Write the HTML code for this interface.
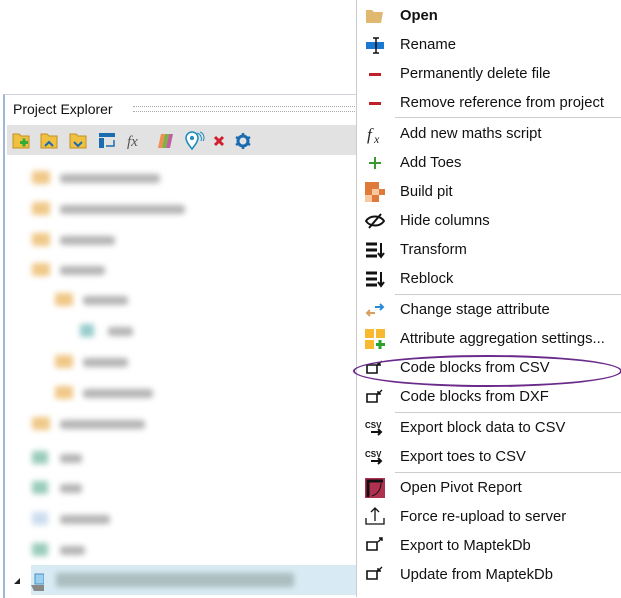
<!DOCTYPE html>
<html><head><style>
body{margin:0;width:621px;height:597px;background:#fff;position:relative;overflow:hidden;font-family:"Liberation Sans",sans-serif}
.panel{position:absolute;left:3px;top:94px;width:353px;height:503px;border-top:1px solid #d0d0d8;border-left:2px solid #9fb6d6;background:#fff}
.hdr{position:absolute;left:8px;top:6px;font-size:14px;color:#111}
.dots{position:absolute;left:128px;top:11px;width:230px;height:4px;border-top:1px dotted #aaa;border-bottom:1px dotted #aaa}
.tb{position:absolute;left:2px;top:30px;width:360px;height:30px;background:#e2e2e2}
.tree{position:absolute;left:0;top:0;filter:blur(3px)}
.fo{position:absolute;width:18px;height:13px;background:#f0c888;border-radius:2px}
.tx{position:absolute;height:9px;background:#b4b4b4;border-radius:3px}
.menu{position:absolute;left:356px;top:0;width:265px;height:597px;background:#fff;border-left:1px solid #ccc}
.it{position:absolute;left:43px;font-size:14.8px;color:#111;line-height:18px;white-space:nowrap}
.sep{position:absolute;left:14px;right:0;height:1px;background:#ccc}
.ic{position:absolute;left:8px;width:20px;height:20px}
</style></head><body>
<div class="panel">
 <div class="hdr">Project Explorer</div>
 <div class="dots"></div>
 <div class="tb">
  <svg width="260" height="30" viewBox="0 0 260 30">
   <g><path d="M6 9h6l2 2h8v12H6z" fill="#f0c040" stroke="#c09020"/><rect x="13" y="16" width="8" height="3" fill="#3a3"/><rect x="15.5" y="13.5" width="3" height="8" fill="#3a3"/></g>
   <g transform="translate(28,0)"><path d="M6 9h6l2 2h8v12H6z" fill="#f0c040" stroke="#c09020"/><path d="M10 21l4-4 4 4" fill="none" stroke="#1a6bb0" stroke-width="2"/></g>
   <g transform="translate(57,0)"><path d="M6 9h6l2 2h8v12H6z" fill="#f0c040" stroke="#c09020"/><path d="M10 17l4 4 4-4" fill="none" stroke="#1a6bb0" stroke-width="2"/></g>
   <g transform="translate(86,0)"><rect x="6" y="8" width="16" height="4" fill="#1a6bb0"/><rect x="6" y="13" width="5" height="10" fill="#1a6bb0"/><path d="M13 21h8v-6" fill="none" stroke="#1a6bb0" stroke-width="1.5"/></g>
   <text x="120" y="21" font-family="Liberation Serif" font-style="italic" font-size="15" fill="#555">fx</text>
   <g transform="translate(144,0)"><path d="M7 23l3-14h4l-3 14z" fill="#f09050"/><path d="M11 23l3-14h4l-3 14z" fill="#7cb342"/><path d="M15 23l3-14h4l-3 14z" fill="#c060a0"/></g>
   <g transform="translate(172,0)"><path d="M13 24c-4-5-6-8-6-11a6 6 0 0112 0c0 3-2 6-6 11z" fill="#fff" stroke="#1a8bc0" stroke-width="1.5"/><circle cx="13" cy="13" r="2" fill="#1a8bc0"/><path d="M18 8a6 6 0 014 8M21 7a6 6 0 013 9" fill="none" stroke="#1a8bc0"/></g>
   <path d="M208 12l8 8M216 12l-8 8" stroke="#d02030" stroke-width="3"/>
   <g transform="translate(236,16)"><circle r="5" fill="none" stroke="#1a6bb0" stroke-width="3"/><path d="M0-8v3M0 5v3M-7-4l3 2M4 2l3 2M-7 4l3-2M4-2l3-2" stroke="#1a6bb0" stroke-width="2.5"/></g>
  </svg>
 </div>
</div>
<div class="tree">
 <div class="fo" style="left:32px;top:171px"></div><div class="tx" style="left:60px;top:174px;width:100px"></div>
 <div class="fo" style="left:32px;top:202px"></div><div class="tx" style="left:60px;top:205px;width:125px"></div>
 <div class="fo" style="left:32px;top:233px"></div><div class="tx" style="left:60px;top:236px;width:55px"></div>
 <div class="fo" style="left:32px;top:263px"></div><div class="tx" style="left:60px;top:266px;width:45px"></div>
 <div class="fo" style="left:55px;top:293px"></div><div class="tx" style="left:83px;top:296px;width:45px"></div>
 <div class="fo" style="left:80px;top:324px;background:#9cc;width:14px"></div><div class="tx" style="left:108px;top:327px;width:25px"></div>
 <div class="fo" style="left:55px;top:355px"></div><div class="tx" style="left:83px;top:358px;width:45px"></div>
 <div class="fo" style="left:55px;top:386px"></div><div class="tx" style="left:83px;top:389px;width:70px"></div>
 <div class="fo" style="left:32px;top:417px"></div><div class="tx" style="left:60px;top:420px;width:85px"></div>
 <div class="fo" style="left:32px;top:451px;background:#9cb;width:16px"></div><div class="tx" style="left:60px;top:454px;width:22px"></div>
 <div class="fo" style="left:32px;top:481px;background:#9cb;width:16px"></div><div class="tx" style="left:60px;top:484px;width:22px"></div>
 <div class="fo" style="left:32px;top:512px;background:#cde;width:16px"></div><div class="tx" style="left:60px;top:515px;width:50px"></div>
 <div class="fo" style="left:32px;top:543px;background:#9cb;width:16px"></div><div class="tx" style="left:60px;top:546px;width:25px"></div>
</div>
<div style="position:absolute;left:31px;top:565px;width:326px;height:30px;background:#d8eaf3"></div>
<div style="position:absolute;left:56px;top:573px;width:238px;height:14px;background:#9aa;filter:blur(3px);opacity:.7"></div>
<svg style="position:absolute;left:14px;top:572px" width="30" height="22"><path d="M0 12l6-6v6z" fill="#222"/><rect x="21" y="2" width="9" height="10" fill="#9cd0f0" stroke="#4a90c0"/><path d="M17 13h16l-3 6H20z" fill="#888"/></svg>
<div class="menu">
 <svg class="ic" style="top:6px" viewBox="0 0 20 20"><path d="M1 4h6l2 2h9l-2 11H1z" fill="#e0b870"/></svg>
 <svg class="ic" style="top:35px" viewBox="0 0 20 20"><rect x="1" y="7" width="18" height="7" fill="#1a78d0"/><path d="M11 3v15M8 3h6M8 18h6" stroke="#111" stroke-width="1.5"/></svg>
 <svg class="ic" style="top:64px" viewBox="0 0 20 20"><rect x="4" y="9" width="12" height="3" fill="#c0202a"/></svg>
 <svg class="ic" style="top:93px" viewBox="0 0 20 20"><rect x="4" y="9" width="12" height="3" fill="#c0202a"/></svg>
 <svg class="ic" style="top:124px" viewBox="0 0 20 20"><text x="2" y="16" font-family="Liberation Serif" font-style="italic" font-size="17" fill="#222">f</text><text x="9" y="19" font-family="Liberation Serif" font-style="italic" font-size="12" fill="#222">x</text></svg>
 <svg class="ic" style="top:153px" viewBox="0 0 20 20"><path d="M10 4v12M4 10h12" stroke="#3a9a30" stroke-width="2"/></svg>
 <svg class="ic" style="top:182px" viewBox="0 0 20 20"><path d="M0 0h14v7h6v13H0z" fill="#e07a3a"/><rect x="7" y="7" width="7" height="6" fill="#f8c8a0"/><rect x="0" y="13" width="7" height="7" fill="#f8c8a0"/><rect x="14" y="13" width="6" height="7" fill="#fff"/></svg>
 <svg class="ic" style="top:211px" viewBox="0 0 20 20"><path d="M1 10c4-6 14-6 18 0c-4 6-14 6-18 0z" fill="none" stroke="#111" stroke-width="2"/><path d="M4 17L16 3" stroke="#111" stroke-width="2"/></svg>
 <svg class="ic" style="top:240px" viewBox="0 0 20 20"><path d="M1 4h11M1 10h11M1 16h11" stroke="#111" stroke-width="3"/><path d="M16 3v13M13 13l3 4 3-4" stroke="#111" stroke-width="2" fill="none"/></svg>
 <svg class="ic" style="top:269px" viewBox="0 0 20 20"><path d="M1 4h11M1 10h11M1 16h11" stroke="#111" stroke-width="3"/><path d="M16 3v13M13 13l3 4 3-4" stroke="#111" stroke-width="2" fill="none"/></svg>
 <svg class="ic" style="top:300px" viewBox="0 0 20 20"><path d="M10 7h8M15 4l3 3-3 3" stroke="#2a8ad8" stroke-width="2" fill="none"/><path d="M2 13h8M5 10l-3 3 3 3" stroke="#d8a060" stroke-width="2" fill="none"/></svg>
 <svg class="ic" style="top:329px" viewBox="0 0 20 20"><rect x="0" y="0" width="9" height="9" fill="#f8b830"/><rect x="11" y="0" width="9" height="9" fill="#f8b830"/><rect x="0" y="11" width="9" height="9" fill="#f8b830"/><path d="M15 11v9M11 15.5h9" stroke="#2aa030" stroke-width="3"/></svg>
 <svg class="ic" style="top:357px" viewBox="0 0 20 20"><path d="M2 8h10v8H2z" fill="none" stroke="#111" stroke-width="1.6"/><path d="M17 4l-4 4M13 5v3h3" stroke="#111" stroke-width="1.4" fill="none"/></svg>
 <svg class="ic" style="top:386px" viewBox="0 0 20 20"><path d="M2 8h10v8H2z" fill="none" stroke="#111" stroke-width="1.6"/><path d="M17 4l-4 4M13 5v3h3" stroke="#111" stroke-width="1.4" fill="none"/></svg>
 <svg class="ic" style="top:418px" viewBox="0 0 20 20"><text x="0" y="10" font-size="8" font-weight="bold" fill="#111">CSV</text><path d="M6 14h10M13 11l3 3-3 3" stroke="#111" stroke-width="2" fill="none"/></svg>
 <svg class="ic" style="top:447px" viewBox="0 0 20 20"><text x="0" y="10" font-size="8" font-weight="bold" fill="#111">CSV</text><path d="M6 14h10M13 11l3 3-3 3" stroke="#111" stroke-width="2" fill="none"/></svg>
 <svg class="ic" style="top:478px" viewBox="0 0 20 20"><rect x="0" y="0" width="20" height="20" fill="#b03050"/><path d="M3 19V3h15" stroke="#111" stroke-width="3" fill="none"/><path d="M7 18c6-2 9-7 9-13" stroke="#111" fill="none"/></svg>
 <svg class="ic" style="top:506px" viewBox="0 0 20 20"><path d="M1 12v6h18v-6" stroke="#111" fill="none" stroke-width="1.3"/><path d="M10 15V2M6 6l4-4 4 4" stroke="#111" fill="none" stroke-width="1.3"/></svg>
 <svg class="ic" style="top:534px" viewBox="0 0 20 20"><path d="M2 8h10v8H2z" fill="none" stroke="#111" stroke-width="1.6"/><path d="M13 8l4-4M14 4h3v3" stroke="#111" stroke-width="1.4" fill="none"/></svg>
 <svg class="ic" style="top:563px" viewBox="0 0 20 20"><path d="M2 8h10v8H2z" fill="none" stroke="#111" stroke-width="1.6"/><path d="M17 4l-4 4M13 5v3h3" stroke="#111" stroke-width="1.4" fill="none"/></svg>
 <div class="it" style="top:7px;font-weight:bold">Open</div>
 <div class="it" style="top:36px">Rename</div>
 <div class="it" style="top:65px">Permanently delete file</div>
 <div class="it" style="top:94px">Remove reference from project</div>
 <div class="sep" style="top:117px;left:38px"></div>
 <div class="it" style="top:125px">Add new maths script</div>
 <div class="it" style="top:154px">Add Toes</div>
 <div class="it" style="top:183px">Build pit</div>
 <div class="it" style="top:212px">Hide columns</div>
 <div class="it" style="top:241px">Transform</div>
 <div class="it" style="top:270px">Reblock</div>
 <div class="sep" style="top:294px;left:38px"></div>
 <div class="it" style="top:301px">Change stage attribute</div>
 <div class="it" style="top:330px">Attribute aggregation settings...</div>
 <div class="it" style="top:359px">Code blocks from CSV</div>
 <div class="it" style="top:388px">Code blocks from DXF</div>
 <div class="sep" style="top:412px;left:38px"></div>
 <div class="it" style="top:419px">Export block data to CSV</div>
 <div class="it" style="top:448px">Export toes to CSV</div>
 <div class="sep" style="top:472px;left:38px"></div>
 <div class="it" style="top:479px">Open Pivot Report</div>
 <div class="it" style="top:508px">Force re-upload to server</div>
 <div class="it" style="top:537px">Export to MaptekDb</div>
 <div class="it" style="top:566px">Update from MaptekDb</div>
</div>
<div style="position:absolute;left:353px;top:355px;width:265px;height:28px;border:2.5px solid #6a2a8a;border-radius:50%"></div>
</body></html>
